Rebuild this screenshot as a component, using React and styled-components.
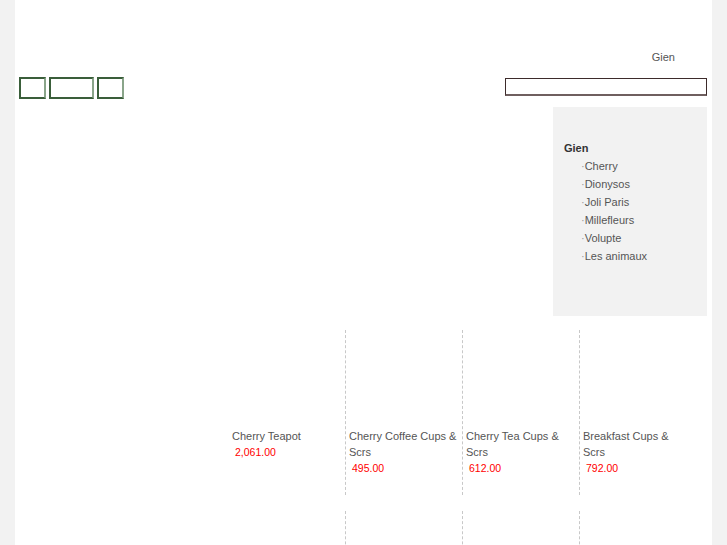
import React from "react";
import styled, { createGlobalStyle } from "styled-components";

const Global = createGlobalStyle`
  html, body { margin: 0; padding: 0; background: #f2f2f2; }
  body { font-family: "Liberation Sans", Arial, sans-serif; }
`;

const Page = styled.div`
  width: 697px;
  margin-left: 15px;
  min-height: 545px;
  background: #fff;
  display: flex;
  flex-direction: column;
`;

const TopBar = styled.div`
  height: 77px;
  display: flex;
  justify-content: flex-end;
  align-items: flex-start;
  padding-right: 37px;
  box-sizing: border-box;
`;

const BrandLink = styled.span`
  margin-top: 50px;
  font-size: 11px;
  line-height: 14px;
  color: #555;
`;

const Toolbar = styled.div`
  display: flex;
  align-items: flex-start;
  justify-content: space-between;
  padding: 0 5px 0 4px;
  height: 30px;
`;

const Buttons = styled.div`
  display: flex;
  gap: 3px;
`;

const NavButton = styled.div`
  width: ${(p) => p.$w}px;
  height: 22px;
  box-sizing: border-box;
  border: 2px solid #3a5e3a;
  border-right-color: #8aa58a;
  background: #fff;
`;

const Search = styled.div`
  margin-top: 1px;
  width: 202px;
  height: 18px;
  box-sizing: border-box;
  border: 1px solid #3d2b2b;
  border-bottom: 2px solid #6f5f5f;
  background: #fff;
`;

const Upper = styled.div`
  display: flex;
  justify-content: flex-end;
  padding-right: 5px;
`;

const Sidebar = styled.div`
  width: 154px;
  height: 209px;
  background: #f2f2f2;
  box-sizing: border-box;
  padding: 32px 0 0 11px;
`;

const SideTitle = styled.div`
  font-size: 11px;
  font-weight: bold;
  color: #333;
  line-height: 18px;
`;

const SideItem = styled.div`
  font-size: 11px;
  line-height: 18px;
  color: #555;
  padding-left: 17px;
  &::before { content: "·"; color: #999; }
`;

const Grid = styled.div`
  display: grid;
  grid-template-columns: repeat(4, 117px);
  row-gap: 16px;
  margin: 14px 0 0 214px;
`;

const Product = styled.div`
  height: 165px;
  box-sizing: border-box;
  padding: 98px 4px 0 3px;
  border-right: ${(p) => (p.$last ? "none" : "1px dashed #c8c8c8")};
`;

const Name = styled.div`
  font-size: 11px;
  line-height: 16px;
  color: #555;
`;

const Price = styled.div`
  font-size: 10.5px;
  line-height: 16px;
  color: #f00;
  padding-left: 3px;
`;

const products = [
  { name: "Cherry Teapot", price: "2,061.00" },
  { name: "Cherry Coffee Cups & Scrs", price: "495.00" },
  { name: "Cherry Tea Cups & Scrs", price: "612.00" },
  { name: "Breakfast Cups & Scrs", price: "792.00" },
  { name: "", price: "" },
  { name: "", price: "" },
  { name: "", price: "" },
  { name: "", price: "" },
];

const series = ["Cherry", "Dionysos", "Joli Paris", "Millefleurs", "Volupte", "Les animaux"];

export default function App() {
  return (
    <>
      <Global />
      <Page>
        <TopBar>
          <BrandLink>Gien</BrandLink>
        </TopBar>
        <Toolbar>
          <Buttons>
            <NavButton $w={27} />
            <NavButton $w={45} />
            <NavButton $w={27} />
          </Buttons>
          <Search />
        </Toolbar>
        <Upper>
          <Sidebar>
            <SideTitle>Gien</SideTitle>
            {series.map((s) => (
              <SideItem key={s}>{s}</SideItem>
            ))}
          </Sidebar>
        </Upper>
        <Grid>
          {products.map((p, i) => (
            <Product key={i} $last={i % 4 === 3}>
              {p.name && <Name>{p.name}</Name>}
              {p.price && <Price>{p.price}</Price>}
            </Product>
          ))}
        </Grid>
      </Page>
    </>
  );
}
